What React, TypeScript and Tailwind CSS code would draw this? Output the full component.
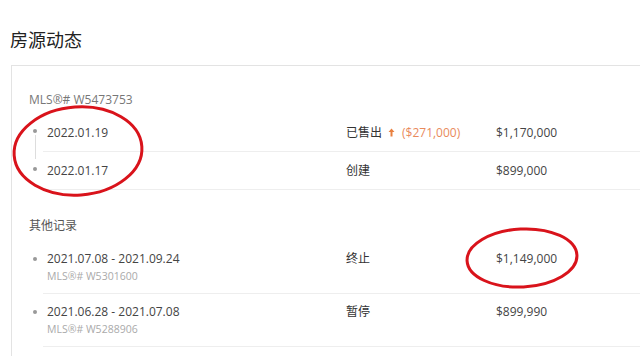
import React from "react";

const font = { fontFamily: '"Open Sans", "Noto Sans CJK SC", sans-serif' };

const recent = [
  { date: "2022.01.19", status: "已售出", diff: "($271,000)", price: "$1,170,000" },
  { date: "2022.01.17", status: "创建", price: "$899,000" },
];

const others = [
  { date: "2021.07.08 - 2021.09.24", mls: "MLS®# W5301600", status: "终止", price: "$1,149,000" },
  { date: "2021.06.28 - 2021.07.08", mls: "MLS®# W5288906", status: "暂停", price: "$899,990" },
];

function UpArrow() {
  return (
    <svg width="7" height="9" viewBox="0 0 7 9" className="ml-[6px]">
      <path d="M3.5 0.5 L6.5 4 H4.5 V8.5 H2.5 V4 H0.5 Z" fill="#e9803f" />
    </svg>
  );
}

function Annotations() {
  return (
    <svg
      className="pointer-events-none absolute left-0 top-0"
      width="640"
      height="356"
      viewBox="0 0 640 356"
    >
      <ellipse
        cx="78"
        cy="151"
        rx="64"
        ry="44"
        transform="rotate(-4 78 151)"
        fill="none"
        stroke="#d9131b"
        strokeWidth="3"
      />
      <ellipse
        cx="522"
        cy="258"
        rx="55"
        ry="29"
        transform="rotate(-3 522 258)"
        fill="none"
        stroke="#d9131b"
        strokeWidth="3"
      />
    </svg>
  );
}

export default function App() {
  return (
    <div
      className="relative h-[356px] w-[640px] overflow-hidden bg-white text-[#333]"
      style={font}
    >
      <div className="pl-[10px] pt-[27px] text-[18px] leading-[26px] text-[#222]">
        房源动态
      </div>

      <div className="ml-[11px] mt-[12px] w-[660px] border border-[#e3e3e3] pl-[17px] pt-[26px]">
        <div className="text-[12px] leading-[16px] text-[#777]">MLS®# W5473753</div>

        <div className="mt-[6px]">
          {recent.map((r, i) => (
            <div key={r.date} className="flex">
              <div className="flex h-[38px] w-[14px] flex-col items-center pr-[2px]">
                <div className="mt-[15px] h-[4px] w-[4px] shrink-0 rounded-full bg-[#999]" />
                {i === 0 && <div className="mt-[2px] h-[24px] w-px shrink-0 bg-[#ddd]" />}
              </div>
              <div className="flex h-[38px] flex-1 items-center border-b border-[#eee] text-[12px]">
                <div className="w-[303px] pl-[4px] text-[#444]">{r.date}</div>
                <div className="flex w-[150px] items-center text-[#333]">
                  <span>{r.status}</span>
                  {r.diff && (
                    <>
                      <UpArrow />
                      <span className="ml-[7px] text-[#e98a5c]">{r.diff}</span>
                    </>
                  )}
                </div>
                <div className="text-[#444]">{r.price}</div>
              </div>
            </div>
          ))}
        </div>

        <div className="mt-[28px] text-[12px] leading-[16px] text-[#555]">其他记录</div>

        <div className="mt-[7px] pb-[20px]">
          {others.map((r) => (
            <div key={r.date} className="flex">
              <div className="flex w-[14px] flex-col items-center pr-[2px]">
                <div className="mt-[16px] h-[4px] w-[4px] rounded-full bg-[#999]" />
              </div>
              <div className="flex h-[53px] flex-1 items-start border-b border-[#eee] pt-[9px] text-[12px] leading-[18px]">
                <div className="w-[303px] pl-[4px]">
                  <div className="text-[#444]">{r.date}</div>
                  <div className="text-[10.5px] leading-[16px] text-[#aaa]">{r.mls}</div>
                </div>
                <div className="w-[150px] text-[#333]">{r.status}</div>
                <div className="text-[#444]">{r.price}</div>
              </div>
            </div>
          ))}
        </div>
      </div>

      <Annotations />
    </div>
  );
}
